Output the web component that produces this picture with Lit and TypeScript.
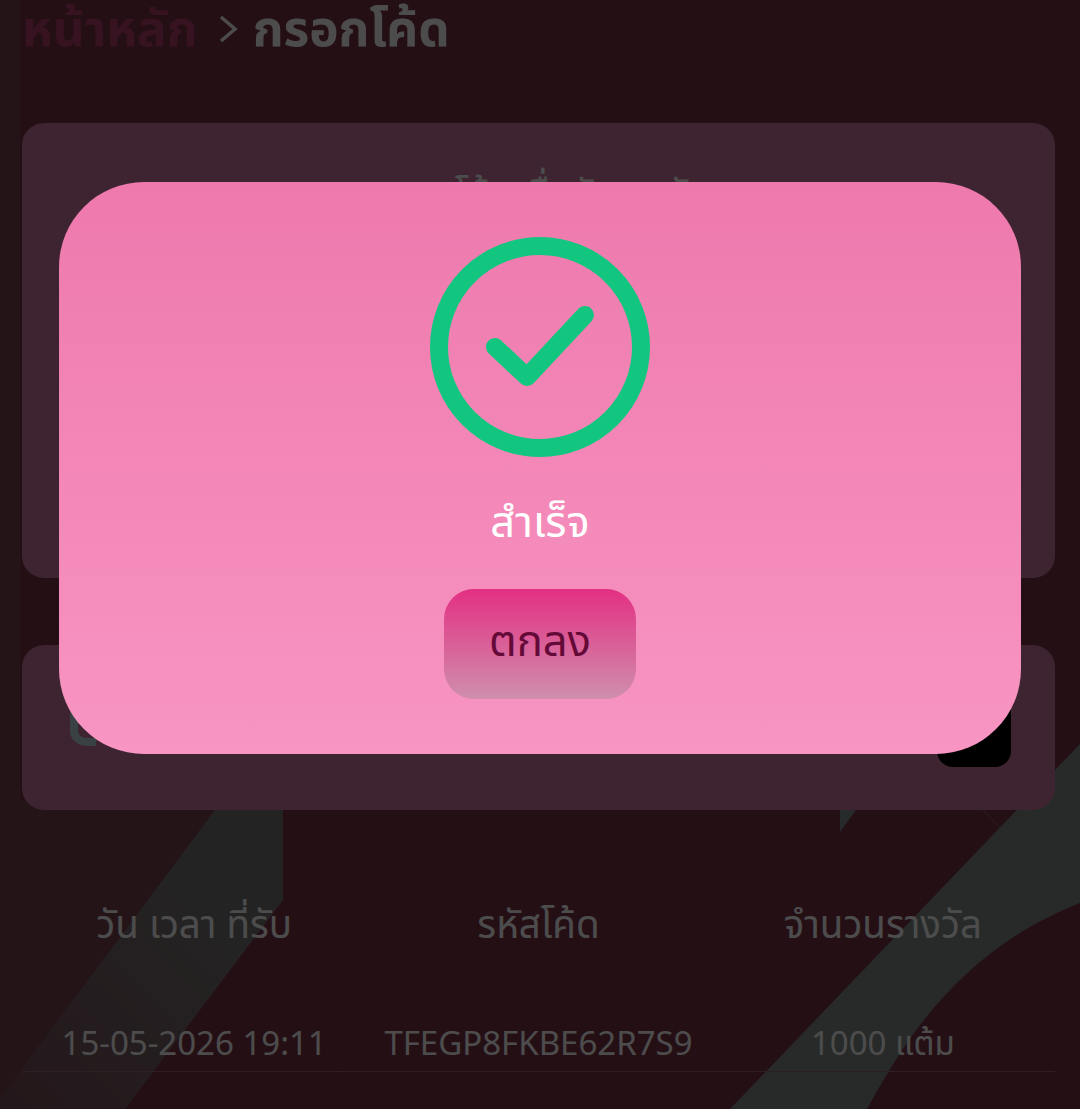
import { LitElement, html, css } from 'lit';
import { customElement, state } from 'lit/decorators.js';

interface Reward {
  time: string;
  code: string;
  amount: string;
}

@customElement('app-root')
export class AppRoot extends LitElement {
  @state() rewards: Reward[] = [
    { time: '15-05-2026 19:11', code: 'TFEGP8FKBE62R7S9', amount: '1000 แต้ม' },
  ];

  static styles = css`
    :host {
      display: block;
      position: relative;
      width: 1080px;
      height: 1109px;
      overflow: hidden;
      font-family: 'Noto Sans', 'Noto Sans Thai', 'Noto Sans Thai UI', 'Noto Sans CJK SC', sans-serif;
      color: #fff;
      background: #7b3247;
    }

    .bg {
      position: absolute;
      inset: 0;
      width: 1080px;
      height: 1109px;
    }

    .page {
      position: relative;
      display: flex;
      flex-direction: column;
      padding: 0 25px 0 22px;
    }

    .crumbs {
      display: flex;
      align-items: center;
      height: 54px;
      font-size: 49.5px;
      line-height: 54px;
      font-weight: 700;
      margin-bottom: 69px;
    }

    .crumbs .home {
      color: #b93f6b;
    }

    .crumbs svg {
      display: block;
      margin: 4px 15px 0 20px;
    }

    .card {
      background: #cb7ba0;
      border-radius: 22px;
    }

    .card-code {
      height: 455px;
      box-sizing: border-box;
      padding-top: 42px;
      text-align: center;
      font-size: 38px;
      margin-bottom: 67px;
    }

    .card-input {
      height: 165px;
      box-sizing: border-box;
      padding: 0 44px 0 46px;
      display: flex;
      align-items: center;
      justify-content: space-between;
      margin-bottom: 89px;
    }

    .send {
      width: 74px;
      height: 78px;
      background: #000;
      border-radius: 16px;
      margin-top: 1px;
    }

    .table {
      display: grid;
      grid-template-columns: repeat(3, 1fr);
      text-align: center;
    }

    .th {
      font-size: 38.5px;
      line-height: 48px;
      padding-bottom: 74px;
    }

    .td {
      font-size: 33px;
      line-height: 44px;
      padding-bottom: 6px;
      border-bottom: 1px solid #9c6a7c;
    }

    .overlay {
      position: absolute;
      inset: 0;
      background: rgba(0, 0, 0, 0.7);
      display: flex;
      justify-content: center;
      align-items: flex-start;
      padding-top: 182px;
    }

    .modal {
      width: 962px;
      height: 572px;
      box-sizing: border-box;
      padding-top: 55px;
      border-radius: 85px;
      background: linear-gradient(180deg, #ee79ad, #f895c2);
      display: flex;
      flex-direction: column;
      align-items: center;
    }

    .modal svg {
      display: block;
    }

    .title {
      font-size: 43.5px;
      line-height: 56px;
      margin-top: 35px;
    }

    .ok {
      width: 192px;
      height: 110px;
      margin-top: 41px;
      border: none;
      border-radius: 30px;
      background: linear-gradient(180deg, #e32f83, #cf8fac);
      color: #640a38;
      font: inherit;
      font-size: 43.5px;
      padding: 0 0 3px;
    }
  `;

  render() {
    return html`
      <svg class="bg" viewBox="0 0 1080 1109">
        <defs>
          <linearGradient id="band" x1="1" y1="0" x2="0" y2="1">
            <stop offset="0.3" stop-color="#7b7777" />
            <stop offset="0.95" stop-color="#7a4f5b" />
          </linearGradient>
        </defs>
        <path d="M0 0H1080V1109H0Z" fill="#7b3247" />
        <path d="M0 0H20V800H283V900L125 1109H0Z" fill="#7a4553" />
        <path d="M215 810H283V900L125 1109H0V1098Z" fill="url(#band)" />
        <path d="M1080 744L730 1109H867C905 1040 960 950 1080 903Z" fill="#828c89" />
        <path d="M840 810H856L840 832Z" fill="#7f8c8c" />
        <path d="M983 810L1000 828" stroke="#8a6a74" stroke-width="1" />
        <ellipse cx="340" cy="1040" rx="14" ry="29" fill="none" stroke="#7f3e52" stroke-width="1" />
      </svg>

      <div class="page">
        <div class="crumbs">
          <span class="home">หน้าหลัก</span>
          <svg width="20" height="30" viewBox="0 0 20 30">
            <path d="M3 3L17 15L3 27" fill="none" stroke="#fff" stroke-width="3.5" />
          </svg>
          <span>กรอกโค้ด</span>
        </div>

        <div class="card card-code">กรอกโค้ดเพื่อรับรางวัล</div>

        <div class="card card-input">
          <svg width="28" height="60" viewBox="0 0 28 60">
            <path d="M6 3V32C6 40 12 44 20 44H28" fill="none" stroke="#bed9e3" stroke-width="8" />
          </svg>
          <div class="send"></div>
        </div>

        <div class="table">
          <div class="th">วัน เวลา ที่รับ</div>
          <div class="th">รหัสโค้ด</div>
          <div class="th">จำนวนรางวัล</div>
          ${this.rewards.map(
            r => html`
              <div class="td">${r.time}</div>
              <div class="td">${r.code}</div>
              <div class="td">${r.amount}</div>
            `
          )}
        </div>
      </div>

      <div class="overlay">
        <div class="modal">
          <svg width="220" height="220" viewBox="0 0 220 220">
            <circle cx="110" cy="110" r="101" fill="none" stroke="#13c67f" stroke-width="18" />
            <path
              d="M65 110L97 140L155 78"
              fill="none"
              stroke="#13c67f"
              stroke-width="18"
              stroke-linecap="round"
              stroke-linejoin="round"
            />
          </svg>
          <div class="title">สำเร็จ</div>
          <button class="ok">ตกลง</button>
        </div>
      </div>
    `;
  }
}
